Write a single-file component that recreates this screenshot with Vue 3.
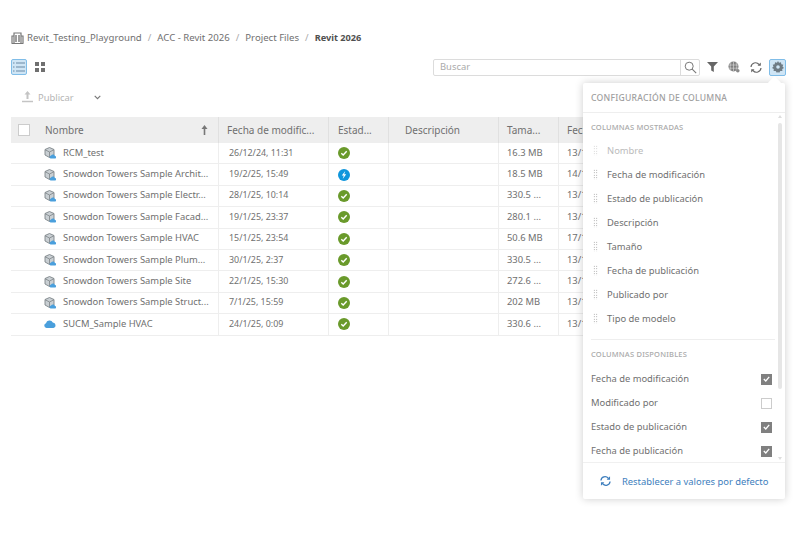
<script setup>
const rows = [
  { name: 'RCM_test', date: '26/12/24, 11:31', st: 'ok', size: '16.3 MB', pub: '13/1', kind: 'model' },
  { name: 'Snowdon Towers Sample Archit...', date: '19/2/25, 15:49', st: 'flash', size: '18.5 MB', pub: '14/1', kind: 'model' },
  { name: 'Snowdon Towers Sample Electr...', date: '28/1/25, 10:14', st: 'ok', size: '330.5 ...', pub: '13/1', kind: 'model' },
  { name: 'Snowdon Towers Sample Facad...', date: '19/1/25, 23:37', st: 'ok', size: '280.1 ...', pub: '13/1', kind: 'model' },
  { name: 'Snowdon Towers Sample HVAC', date: '15/1/25, 23:54', st: 'ok', size: '50.6 MB', pub: '17/1', kind: 'model' },
  { name: 'Snowdon Towers Sample Plum...', date: '30/1/25, 2:37', st: 'ok', size: '330.5 ...', pub: '13/1', kind: 'model' },
  { name: 'Snowdon Towers Sample Site', date: '22/1/25, 15:30', st: 'ok', size: '272.6 ...', pub: '13/1', kind: 'model' },
  { name: 'Snowdon Towers Sample Struct...', date: '7/1/25, 15:59', st: 'ok', size: '202 MB', pub: '13/1', kind: 'model' },
  { name: 'SUCM_Sample HVAC', date: '24/1/25, 0:09', st: 'ok', size: '330.6 ...', pub: '13/1', kind: 'cloud' }
]
const shown = ['Nombre', 'Fecha de modificación', 'Estado de publicación', 'Descripción', 'Tamaño', 'Fecha de publicación', 'Publicado por', 'Tipo de modelo']
const avail = [
  { t: 'Fecha de modificación', c: true },
  { t: 'Modificado por', c: false },
  { t: 'Estado de publicación', c: true },
  { t: 'Fecha de publicación', c: true }
]
</script>

<template>
  <div class="page">
    <nav class="crumbs">
      <svg class="bld" width="13" height="13" viewBox="0 0 13 13">
        <path d="M3 12V2h7v10M1 12V5h2M10 5h2v7M0.5 12.5h12" fill="none" stroke="#777" stroke-width="1.2"/>
        <path d="M5 4v7M8 4v7" stroke="#777" stroke-width="1.4"/>
      </svg>
      <span>Revit_Testing_Playground</span><i>/</i>
      <span>ACC - Revit 2026</span><i>/</i>
      <span>Project Files</span><i>/</i>
      <b>Revit 2026</b>
    </nav>

    <div class="toolbar">
      <div class="views">
        <button class="vbtn active">
          <svg width="12" height="10" viewBox="0 0 12 10"><path d="M0 1h1.500M3 1h9M0 5h1.500M3 5h9M0 9h1.500M3 9h9" stroke="#6a8aa5" stroke-width="1.200"/></svg>
        </button>
        <button class="vbtn">
          <svg width="10" height="10" viewBox="0 0 10 10"><path d="M0 0h4v4H0zM6 0h4v4H6zM0 6h4v4H0zM6 6h4v4H6z" fill="#707070"/></svg>
        </button>
      </div>
      <div class="right">
        <div class="search">
          <span class="ph">Buscar</span>
          <span class="lens">
            <svg width="13" height="13" viewBox="0 0 13 13"><circle cx="5.200" cy="5.200" r="4" fill="none" stroke="#777" stroke-width="1"/><path d="M8.200 8.200l4 4" stroke="#777" stroke-width="1.100"/></svg>
          </span>
        </div>
        <svg class="tool t-filter" width="11" height="10" viewBox="0 0 11 10"><path d="M0 0h11L6.800 4.600V10L4.200 8.400V4.600z" fill="#666"/></svg>
        <svg class="tool" width="12" height="12" viewBox="0 0 12 12"><circle cx="5.500" cy="5.500" r="5" fill="#808080"/><path d="M1 4h9M1 7.200h9M5.500 .5v10M3 1.500c-1 2.500-1 5.500 0 8M8 1.500c1 2.500 1 5.500 0 8" stroke="#ddd" stroke-width=".6" fill="none"/><circle cx="9.800" cy="9.800" r="1.800" fill="#888"/></svg>
        <svg class="tool" width="12" height="11" viewBox="0 0 12 11"><path d="M1 5a4.500 4.500 0 0 1 8-2.500M11 6a4.500 4.500 0 0 1-8 2.500" fill="none" stroke="#666" stroke-width="1.200"/><path d="M10.800 .5v3.300H7.500zM1.200 10.500V7.200h3.300z" fill="#666"/></svg>
        <button class="gear">
          <svg width="12" height="12" viewBox="0 0 12 12"><path d="M6 0l1 1.800 2-.6.3 2 2 .5-.8 1.900L12 7l-1.800 1 .2 2.100-2.100-.1L7 12 6 10.800 5 12l-1.300-2-2.100.1.200-2.100L0 7l1.500-1.400L.7 3.700l2-.5.3-2 2 .6z" fill="#6f7b84"/><circle cx="6" cy="6" r="1.800" fill="#cfe5f5"/></svg>
        </button>
      </div>
    </div>

    <div class="actions">
      <svg width="11" height="12" viewBox="0 0 11 12"><path d="M5.500 0L8.500 3.500H6.500V8H4.500V3.500H2.500z" fill="#c4c4c4"/><path d="M0 10.500h11" stroke="#c4c4c4" stroke-width="1.500"/></svg>
      <span class="pub">Publicar</span>
      <svg class="chev" width="7" height="5" viewBox="0 0 7 5"><path d="M.7 .8l2.800 2.800L6.300 .8" fill="none" stroke="#777" stroke-width="1.100"/></svg>
    </div>

    <div class="table">
      <div class="row head">
        <div class="c c-name">
          <span class="box"></span>
          <span class="hname">Nombre</span>
          <svg width="7" height="10" viewBox="0 0 7 10"><path d="M3.500 0L6.500 4H4.300v6H2.700V4H.5z" fill="#777"/></svg>
        </div>
        <div class="c c-date">Fecha de modific...</div>
        <div class="c c-st">Estad...</div>
        <div class="c c-desc">Descripción</div>
        <div class="c c-size">Tama...</div>
        <div class="c c-pub">Fecha</div>
      </div>
      <div v-for="r in rows" :key="r.name" class="row">
        <div class="c c-name">
          <svg v-if="r.kind === 'model'" class="ficon" width="12" height="12" viewBox="0 0 12 12">
            <path d="M5.500 .5L10 2.500V8L5.500 10.500 1 8V2.500z" fill="#c9cfd3" stroke="#7d8488" stroke-width=".9"/>
            <path d="M1 2.700L5.500 5 10 2.700M5.500 5v5.500" fill="none" stroke="#7d8488" stroke-width=".8"/>
            <path d="M6.500 11.500a1.600 1.600 0 0 1 .6-3 2.200 2.200 0 0 1 4 .5 1.300 1.300 0 0 1 .2 2.500z" fill="#4a9fdc"/>
          </svg>
          <svg v-else class="ficon" width="12" height="8" viewBox="0 0 12 8">
            <path d="M2.500 8A2.400 2.400 0 0 1 2 3.300 3.600 3.600 0 0 1 8.800 2.500 2.800 2.800 0 0 1 9.500 8z" fill="#4a9fdc"/>
          </svg>
          <span class="fname">{{ r.name }}</span>
        </div>
        <div class="c c-date body-date up1">{{ r.date }}</div>
        <div class="c c-st">
          <svg v-if="r.st === 'ok'" width="12" height="12" viewBox="0 0 12 12"><circle cx="6" cy="6" r="6" fill="#6a9a2b"/><path d="M3.300 6.200l1.900 1.800 3.500-3.800" fill="none" stroke="#fff" stroke-width="1.400"/></svg>
          <svg v-else width="12" height="12" viewBox="0 0 12 12"><circle cx="6" cy="6" r="6" fill="#0f96dc"/><path d="M7.300 2L3.800 6.600h2L4.700 10l3.500-4.700h-2z" fill="#fff"/></svg>
        </div>
        <div class="c c-desc"></div>
        <div class="c c-size up1">{{ r.size }}</div>
        <div class="c c-pub up1">{{ r.pub }}</div>
      </div>
    </div>

    <aside class="panel">
      <span class="notch"></span>
      <header class="ptitle">CONFIGURACIÓN DE COLUMNA</header>
      <div class="pbody">
        <div class="plist">
          <h4>COLUMNAS MOSTRADAS</h4>
          <div v-for="(s, i) in shown" :key="s" class="shown" :class="{ off: i === 0 }">
            <span class="grip"></span>{{ s }}
          </div>
          <hr />
          <h4 class="h2">COLUMNAS DISPONIBLES</h4>
          <div v-for="a in avail" :key="a.t" class="av">
            <span class="avt">{{ a.t }}</span>
            <span class="chk" :class="{ on: a.c }">
              <svg v-if="a.c" width="7" height="6" viewBox="0 0 7 6"><path d="M.8 3l2 2L6.200 .9" fill="none" stroke="#fff" stroke-width="1.300"/></svg>
            </span>
          </div>
        </div>
        <div class="sbar">
          <span class="arr up"></span>
          <span class="thumb"></span>
          <span class="arr down"></span>
        </div>
      </div>
      <footer class="pfoot">
        <svg width="11" height="10" viewBox="0 0 12 11"><path d="M1 5a4.500 4.500 0 0 1 8-2.500M11 6a4.500 4.500 0 0 1-8 2.500" fill="none" stroke="#3d7ebd" stroke-width="1.400"/><path d="M11 .3v3.700H7.300zM1 10.700V7h3.700z" fill="#3d7ebd"/></svg>
        <span>Restablecer a valores por defecto</span>
      </footer>
    </aside>
  </div>
</template>

<style>
html, body { margin: 0; background: #fff; overflow: hidden; }
</style>

<style scoped>
.page {
  position: relative;
  width: 800px;
  height: 547px;
  overflow: hidden;
  font-family: "Noto Sans", Roboto, sans-serif;
  font-size: 9.4px;
  color: #707070;
  box-sizing: border-box;
  padding: 30px 14px 0 11px;
}
.crumbs {
  display: flex;
  align-items: center;
  height: 14px;
  font-size: 9.6px;
}
.bld { margin-right: 3px; }
.crumbs i { font-style: normal; color: #aaa; margin: 0 6px; }
.crumbs b { font-weight: 700; font-size: 9.2px; color: #505050; }
.toolbar {
  display: flex;
  align-items: center;
  justify-content: space-between;
  margin-top: 15px;
  height: 16px;
}
.views { display: flex; gap: 5px; }
.vbtn {
  width: 16px;
  height: 16px;
  padding: 0;
  border: 1px solid transparent;
  background: none;
  display: flex;
  align-items: center;
  justify-content: center;
  box-sizing: border-box;
  border-radius: 2px;
}
.vbtn.active { background: #cfe5f5; border-color: #80bde8; }
.right { display: flex; align-items: center; }
.search {
  width: 267px;
  height: 17px;
  border: 1px solid #dcdcdc;
  border-radius: 2px;
  display: flex;
  align-items: center;
  justify-content: space-between;
  box-sizing: border-box;
  padding-left: 6px;
  color: #aaa;
}
.ph { margin-bottom: 1px; }
.lens {
  width: 18px;
  height: 15px;
  border-left: 1px solid #dcdcdc;
  display: flex;
  align-items: center;
  justify-content: center;
}
.tool { margin-left: 10px; flex: none; }
.t-filter { margin-left: 7px; }
.gear {
  margin-left: 7px;
  width: 17px;
  height: 17px;
  padding: 0;
  background: #cfe5f5;
  border: 1px solid #80bde8;
  border-radius: 2px;
  display: flex;
  align-items: center;
  justify-content: center;
  box-sizing: border-box;
}
.actions {
  display: flex;
  align-items: center;
  height: 16px;
  margin-top: 14px;
  padding-left: 11px;
}
.pub { margin-left: 5px; color: #b5b5b5; }
.chev { margin-left: 20px; }
.table { margin-top: 12px; width: 774px; }
.row {
  display: flex;
  height: 21.4px;
  border-bottom: 1px solid #eee;
  box-sizing: border-box;
}
.row.head {
  height: 26px;
  background: #eeeeee;
  border-bottom: 0;
  font-size: 10px;
}
.c {
  box-sizing: border-box;
  display: flex;
  align-items: center;
  border-right: 1px solid #eee;
  white-space: nowrap;
  overflow: hidden;
  flex: none;
}
.up1 { padding-bottom: 2px; }
.head .c { border-right-color: #e0e0e0; }
.c-name { width: 208px; padding-left: 33px; }
.head .c-name { padding-left: 7px; padding-right: 10px; }
.c-date { width: 110px; padding-left: 8px; }
.body-date { padding-left: 10px; font-size: 8.9px; }
.c-st { width: 60px; padding-left: 9px; }
.c-desc { width: 110px; padding-left: 16px; }
.c-size { width: 60px; padding-left: 8px; }
.c-pub { width: 226px; padding-left: 8px; border-right: 0; }
.box {
  width: 10px;
  height: 10px;
  background: #fff;
  border: 1px solid #ccc;
  flex: none;
}
.hname { flex: 1; margin-left: 15px; }
.ficon { flex: none; margin-right: 7px; }
.fname { margin-bottom: 2px; }
.panel {
  position: absolute;
  left: 583px;
  top: 83px;
  width: 202px;
  height: 416px;
  background: #fff;
  border-radius: 2px;
  box-shadow: 0 0 8px rgba(0, 0, 0, .2);
  display: flex;
  flex-direction: column;
}
.notch {
  position: absolute;
  right: 6px;
  top: -5px;
  width: 9px;
  height: 9px;
  background: #fff;
  transform: rotate(45deg);
}
.ptitle {
  position: relative;
  height: 29px;
  line-height: 31px;
  padding-left: 8px;
  font-size: 8.6px;
  font-weight: 500;
  letter-spacing: .25px;
  color: #a0a0a0;
  border-bottom: 1px solid #eee;
  flex: none;
}
.pbody { display: flex; flex: 1; min-height: 0; overflow: hidden; }
.plist { flex: 1; min-width: 0; padding: 8px 0 0 8px; }
h4 {
  margin: 0;
  height: 12px;
  line-height: 12px;
  font-size: 7.5px;
  font-weight: 500;
  letter-spacing: .2px;
  color: #aaa;
}
.shown {
  height: 24px;
  box-sizing: border-box;
  padding-bottom: 2px;
  display: flex;
  align-items: center;
}
h4 + .shown { margin-top: 6px; }
.shown.off { color: #bbb; }
.grip {
  width: 5px;
  height: 11px;
  margin: 0 9px 0 2px;
  background-image: radial-gradient(circle, #8a8a8a 0.7px, transparent 0.8px);
  background-size: 2.500px 2.500px;
}
.shown.off .grip { opacity: .5; }
hr { border: 0; border-top: 1px solid #eee; margin: 8px 0 0; }
.h2 { margin-top: 8px; }
h4.h2 + .av { margin-top: 7px; }
.av {
  height: 24px;
  display: flex;
  align-items: center;
  justify-content: space-between;
  padding-right: 3px;
}
.avt { margin-bottom: 2px; }
.chk {
  width: 11px;
  height: 11px;
  box-sizing: border-box;
  border: 1px solid #ccc;
  display: flex;
  align-items: center;
  justify-content: center;
}
.chk.on { background: #808080; border-color: #808080; }
.sbar {
  width: 9px;
  flex: none;
  position: relative;
  display: flex;
  flex-direction: column;
  align-items: center;
  padding-right: 1px;
}
.thumb {
  width: 4px;
  height: 266px;
  margin-top: 5px;
  background: #e6e6e6;
  border-radius: 2px;
}
.arr { width: 0; height: 0; border-left: 2px solid transparent; border-right: 2px solid transparent; }
.up { border-bottom: 3px solid #ddd; margin-top: 2px; }
.down { border-top: 3px solid #ddd; margin-top: auto; margin-bottom: 2px; }
.pfoot {
  flex: none;
  height: 36px;
  border-top: 1px solid #f0f0f0;
  display: flex;
  align-items: center;
  padding-left: 17px;
  gap: 11px;
  color: #3d7ebd;
}
</style>
